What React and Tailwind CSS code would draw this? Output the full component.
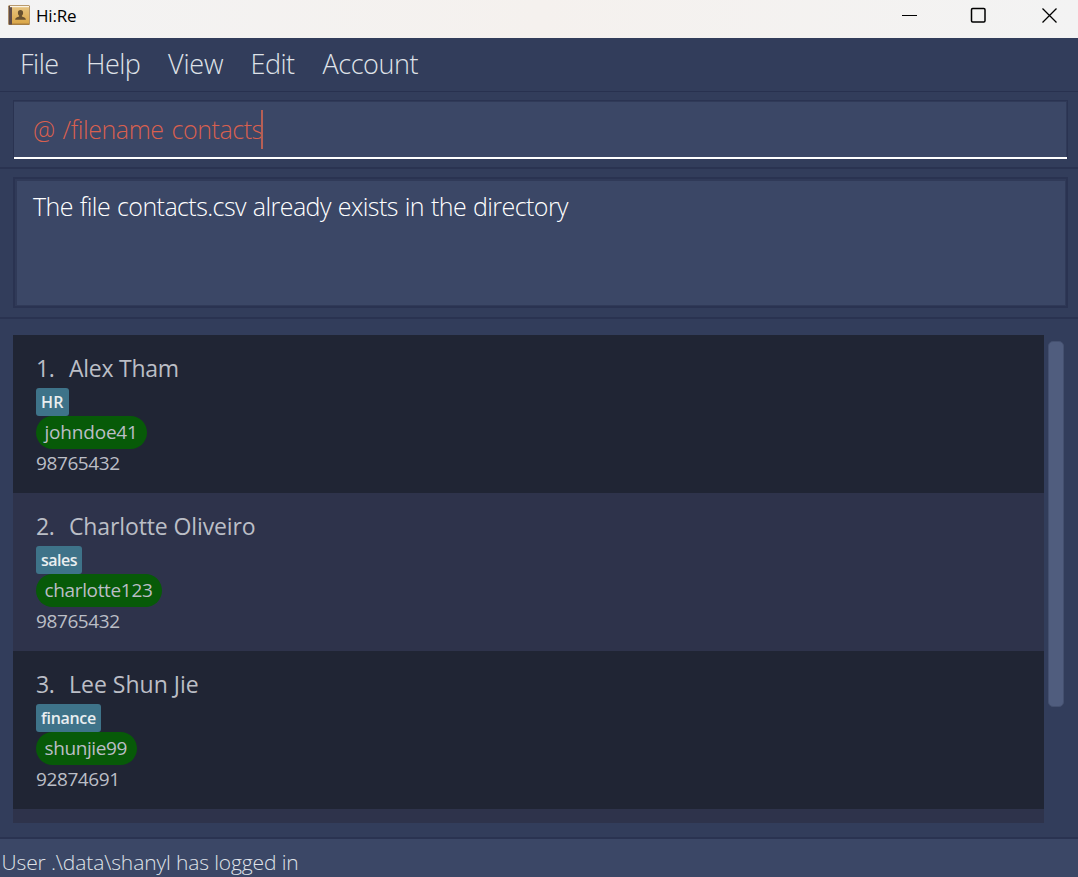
const menus = [
  { label: "File", cls: "w-[66px] tracking-[-0.5px]" },
  { label: "Help", cls: "w-[82px] tracking-[-0.5px]" },
  { label: "View", cls: "w-[82.5px] tracking-[-0.2px]" },
  { label: "Edit", cls: "w-[72px] tracking-[-0.5px]" },
  { label: "Account", cls: "tracking-[-0.45px]" },
];

const people = [
  {
    name: "Alex Tham", nameCls: "tracking-[-0.25px]",
    tag: "HR", tagCls: "w-[33px] tracking-[0.2px]",
    user: "johndoe41", userCls: "w-[111px] tracking-[-0.2px]",
    phone: "98765432",
  },
  {
    name: "Charlotte Oliveiro", nameCls: "tracking-[-0.12px]",
    tag: "sales", tagCls: "w-[46px] tracking-[-0.5px]",
    user: "charlotte123", userCls: "w-[126px] tracking-[-0.35px]",
    phone: "98765432",
  },
  {
    name: "Lee Shun Jie", nameCls: "",
    tag: "finance", tagCls: "w-[65px] tracking-[-0.3px]",
    user: "shunjie99", userCls: "w-[101px] tracking-[-0.4px]",
    phone: "92874691",
  },
];

function BookIcon() {
  return (
    <svg width="23" height="22" viewBox="0 0 23 22">
      <defs>
        <linearGradient id="cover" x1="0" y1="0" x2="0" y2="1">
          <stop offset="0" stopColor="#e6c37e" />
          <stop offset="1" stopColor="#dba748" />
        </linearGradient>
      </defs>
      <rect x="0.3" y="0.3" width="21.500" height="19.700" rx="1" fill="#a67d42" />
      <rect x="0.800" y="1" width="3.200" height="18.500" fill="#5f4c48" />
      <rect x="4" y="2" width="17" height="16.500" fill="url(#cover)" />
      <rect x="2" y="1" width="19" height="1.200" fill="#fbf4e4" />
      <path d="M12.500 5c1.700 0 2.600 1.100 2.600 2.700 0 1.300-.5 2.300-1.200 2.900v.9c1.600.5 3.700.9 4 3.200H7.100c.3-2.300 2.400-2.700 4-3.200v-.9c-.7-.6-1.200-1.600-1.200-2.900C9.900 6.100 10.800 5 12.500 5z" fill="#67502f" />
    </svg>
  );
}

function TitleBar() {
  return (
    <header className="flex h-[38px] shrink-0 items-start bg-gradient-to-r from-[#f3f3f3] via-[#f5f1ee] to-[#f3f3f3] pl-2 text-black">
      <div className="pt-[5px]"><BookIcon /></div>
      <span className="ml-[5px] text-[17px] leading-8 tracking-[-0.2px]">Hi:Re</span>
      <div className="ml-auto flex pt-[7px] pr-5">
        <svg width="16" height="17" viewBox="0 0 16 17" className="mr-[53px]">
          <path d="M1 8.500h15" stroke="#000" />
        </svg>
        <svg width="16" height="17" viewBox="0 0 16 17" className="mr-[55px]">
          <rect x="1.500" y="1.500" width="13.500" height="13.500" rx="1.200" fill="none" stroke="#000" strokeWidth="1.500" />
        </svg>
        <svg width="17" height="17" viewBox="0 0 17 17">
          <path d="M1.500 1.500l14 14M15.500 1.500l-14 14" stroke="#000" strokeWidth="1.300" />
        </svg>
      </div>
    </header>
  );
}

function PersonRow({ index, person }) {
  return (
    <li className="h-[158px] pt-[17px] pl-[23px] text-[#bbbec6] odd:bg-[#202534] even:bg-[#2e334b]">
      <div className="mb-1 flex h-8 text-[23px] leading-8">
        <span className="w-[33px] tracking-[-0.5px]">{index}.</span>
        <span className={person.nameCls}>{person.name}</span>
      </div>
      <div className={"h-7 rounded-[3px] bg-[#3e7389] pl-[5px] text-base leading-7 font-semibold whitespace-nowrap text-[#e9eef0] " + person.tagCls}>
        {person.tag}
      </div>
      <div className={"h-[33px] rounded-full bg-[#075a08] pl-[8.5px] text-[19px] leading-8 whitespace-nowrap " + person.userCls}>
        {person.user}
      </div>
      <div className="text-[19px] leading-7 tracking-[-0.4px]">{person.phone}</div>
    </li>
  );
}

export default function App() {
  return (
    <div className="flex h-[877px] w-[1078px] flex-col overflow-hidden bg-[#323d5b] font-['Open_Sans','Noto_Sans',sans-serif]">
      <TitleBar />
      <nav className="flex h-[54px] shrink-0 border-b border-[#28314f] pl-5 text-[27px] leading-[52px] font-light text-[#dfe2e8]">
        {menus.map((m) => (
          <span key={m.label} className={m.cls}>{m.label}</span>
        ))}
      </nav>

      <section className="h-[77px] shrink-0 border-b-2 border-[#2a3351] pt-2 pr-2.5 pl-[13px]">
        <div className="h-[59px] border-x border-t border-[#2a3351]">
          <div className="flex h-[58px] items-start border-b-2 border-white bg-[#3b4766] pl-[19px] shadow-[inset_0_1px_0_#303a58,inset_-1px_0_0_#303a58]">
            <span className="pt-2 text-[25px] leading-[40px] font-light tracking-[-0.43px] [word-spacing:1.800px] whitespace-nowrap text-[#d9604f]">@ /filename contacts</span>
            <span className="mt-[9px] -ml-0.5 h-[39px] w-0.5 bg-[#b65f55]" />
          </div>
        </div>
      </section>

      <section className="h-[150px] shrink-0 border-b-2 border-[#2a3351] pt-2 pr-2.5 pl-[13px]">
        <div className="h-[131px] border-2 border-[#2a3351] bg-[#3b4766] pt-[9px] pl-[18px] text-[25px] leading-[36px] font-light tracking-[-0.57px] text-white shadow-[inset_2px_2px_0_#303a58,inset_-1px_-1px_0_#303a58] [word-spacing:1px]">
          The file contacts.csv already exists in the directory
        </div>
      </section>

      <main className="flex h-[518px] shrink-0 pt-4 pl-[13px]">
        <ul className="h-[488px] w-[1031px] overflow-hidden">
          {people.map((p, i) => (
            <PersonRow key={p.user} index={i + 1} person={p} />
          ))}
          <li className="h-[14px] bg-[#2e334b]" />
        </ul>
        <div className="mt-1.5 ml-1 h-[366px] w-4 rounded-[5px] border border-[#44506f] bg-[#505d7e]" />
      </main>

      <footer className="h-10 shrink-0 border-t-2 border-[#2a3351] bg-[#3b4766] pt-[7px] pl-[1.5px] text-[21px] leading-8 font-light tracking-[-0.12px] whitespace-nowrap text-[#dfe2e8]">
        User .\data\shanyl has logged in
      </footer>
    </div>
  );
}
